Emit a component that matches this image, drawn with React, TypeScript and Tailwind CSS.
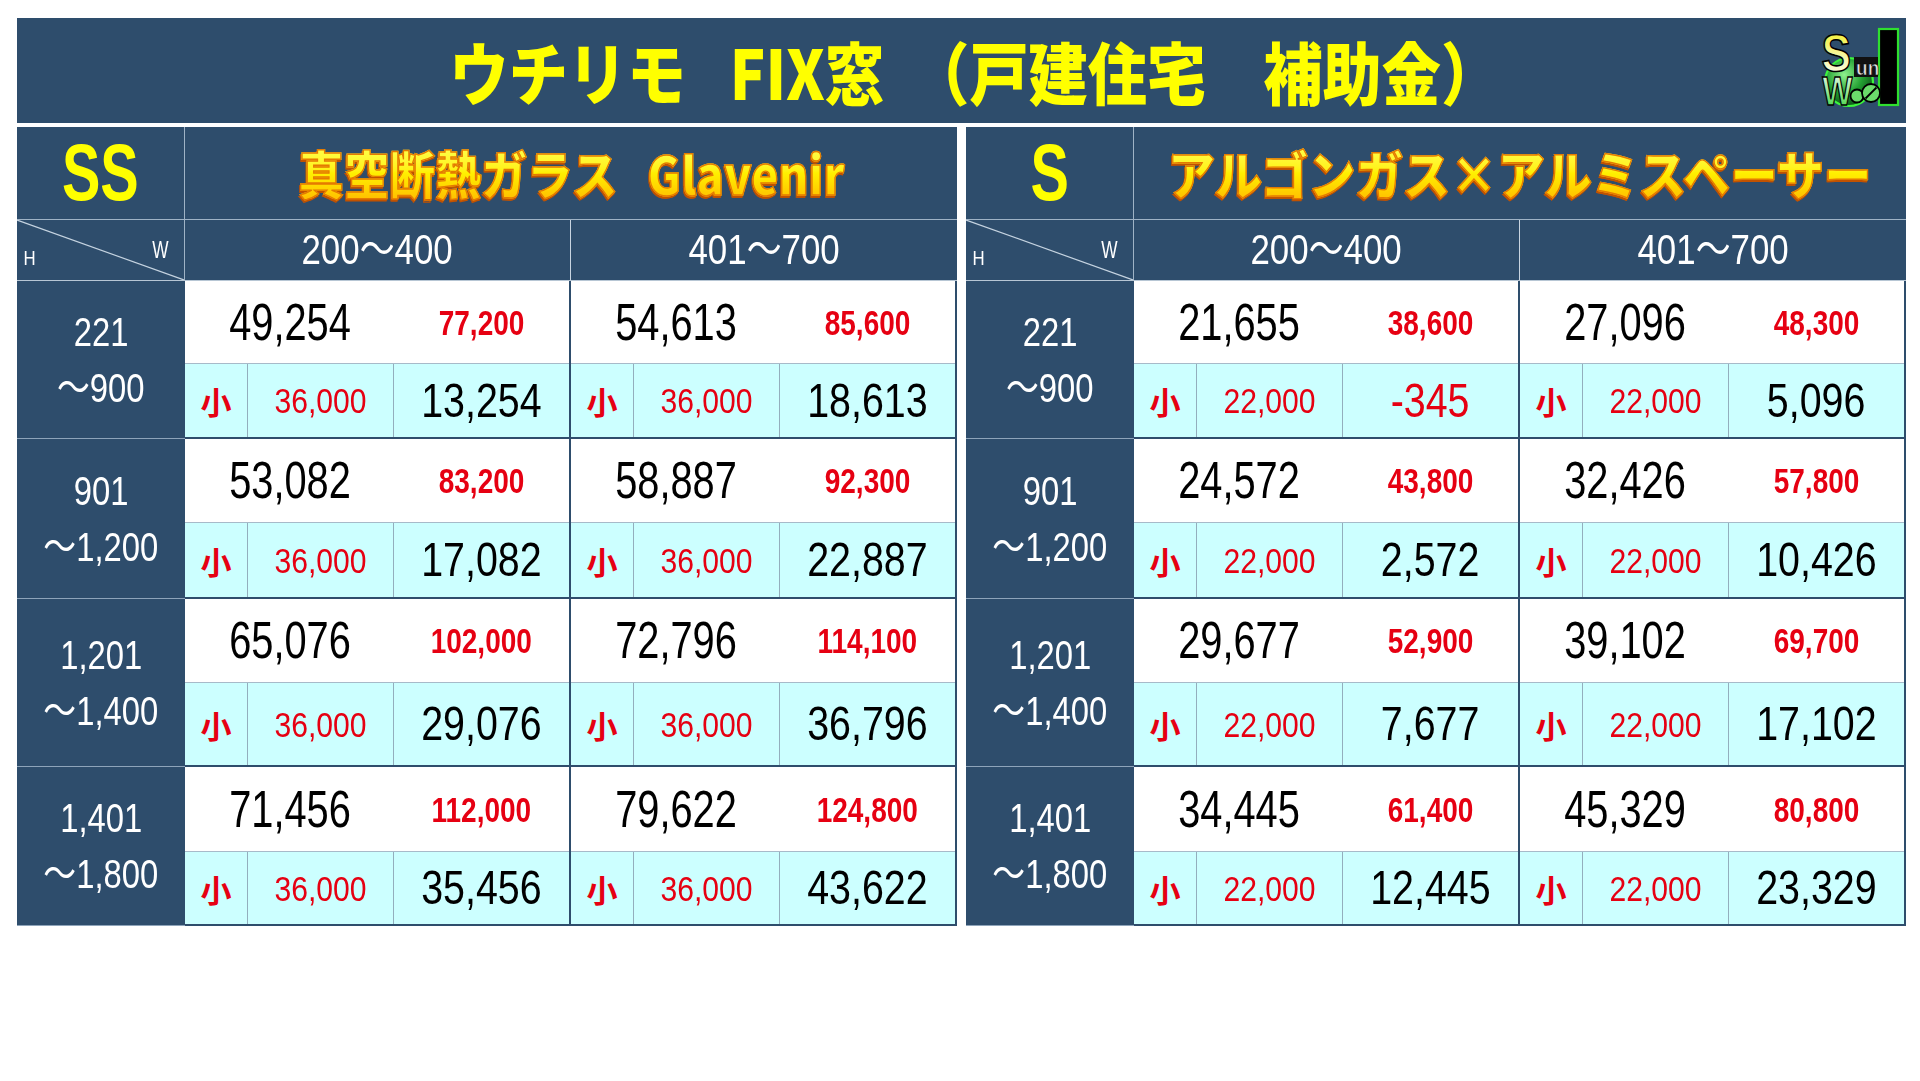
type Cell = {
  total: string;
  price: string;
  sub: string;
  net: string;
  negative?: boolean;
};

type Row = {
  from: string;
  to: string;
  whiteCls: string;
  cyanCls: string;
  cells: [Cell, Cell];
};

type TableData = {
  grade: string;
  title: React.ReactNode;
  rows: Row[];
};

const ROW_SIZES = [
  { whiteCls: "h-[83px]", cyanCls: "h-[73px]" },
  { whiteCls: "h-[84px]", cyanCls: "h-[74px]" },
  { whiteCls: "h-[84px]", cyanCls: "h-[82px]" },
  { whiteCls: "h-[85px]", cyanCls: "h-[72px]" },
];

const RANGES = [
  ["221", "～900"],
  ["901", "～1,200"],
  ["1,201", "～1,400"],
  ["1,401", "～1,800"],
];

function makeRows(cells: [Cell, Cell][]): Row[] {
  return cells.map((c, i) => ({
    from: RANGES[i][0],
    to: RANGES[i][1],
    whiteCls: ROW_SIZES[i].whiteCls,
    cyanCls: ROW_SIZES[i].cyanCls,
    cells: c,
  }));
}

const GLAVENIR: TableData = {
  grade: "SS",
  title: (
    <>
      真空断熱ガラス<span className="ml-[34px]">Glavenir</span>
    </>
  ),
  rows: makeRows([
    [
      { total: "49,254", price: "77,200", sub: "36,000", net: "13,254" },
      { total: "54,613", price: "85,600", sub: "36,000", net: "18,613" },
    ],
    [
      { total: "53,082", price: "83,200", sub: "36,000", net: "17,082" },
      { total: "58,887", price: "92,300", sub: "36,000", net: "22,887" },
    ],
    [
      { total: "65,076", price: "102,000", sub: "36,000", net: "29,076" },
      { total: "72,796", price: "114,100", sub: "36,000", net: "36,796" },
    ],
    [
      { total: "71,456", price: "112,000", sub: "36,000", net: "35,456" },
      { total: "79,622", price: "124,800", sub: "36,000", net: "43,622" },
    ],
  ]),
};

const ARGON: TableData = {
  grade: "S",
  title: <>アルゴンガス×アルミスペーサー</>,
  rows: makeRows([
    [
      { total: "21,655", price: "38,600", sub: "22,000", net: "-345", negative: true },
      { total: "27,096", price: "48,300", sub: "22,000", net: "5,096" },
    ],
    [
      { total: "24,572", price: "43,800", sub: "22,000", net: "2,572" },
      { total: "32,426", price: "57,800", sub: "22,000", net: "10,426" },
    ],
    [
      { total: "29,677", price: "52,900", sub: "22,000", net: "7,677" },
      { total: "39,102", price: "69,700", sub: "22,000", net: "17,102" },
    ],
    [
      { total: "34,445", price: "61,400", sub: "22,000", net: "12,445" },
      { total: "45,329", price: "80,800", sub: "22,000", net: "23,329" },
    ],
  ]),
};

function Logo() {
  return (
    <svg width="82" height="80" viewBox="0 0 82 80" overflow="visible">
      <defs>
        <radialGradient id="lg-ball" cx="40%" cy="35%" r="70%">
          <stop offset="0%" stopColor="#8ef08e" />
          <stop offset="55%" stopColor="#23a032" />
          <stop offset="100%" stopColor="#0b4a14" />
        </radialGradient>
        <linearGradient id="lg-s" x1="0" y1="0" x2="0" y2="1">
          <stop offset="0%" stopColor="#f0ee10" />
          <stop offset="55%" stopColor="#f6f6a0" />
          <stop offset="100%" stopColor="#ffffff" />
        </linearGradient>
        <linearGradient id="lg-w" x1="0" y1="0" x2="0" y2="1">
          <stop offset="0%" stopColor="#ffffff" />
          <stop offset="100%" stopColor="#2fd02f" />
        </linearGradient>
      </defs>
      <circle cx="30" cy="55" r="24" fill="url(#lg-ball)" stroke="#3cf53c" strokeWidth="2.2" />
      <rect x="60" y="2" width="19" height="76" fill="#000" stroke="#2fe02f" strokeWidth="2.2" />
      <rect x="35" y="30" width="24" height="20" fill="#111" />
      <text x="3" y="44" fontSize="52" fontWeight="700" fontFamily="Liberation Sans, sans-serif" fill="url(#lg-s)" stroke="#000" strokeWidth="1.6" transform="scale(0.85 1)">
        S
      </text>
      <text x="39" y="48" fontSize="20" fontWeight="700" fontFamily="Liberation Sans, sans-serif" fill="#e2e2e2" stroke="#000" strokeWidth="0.6" transform="scale(0.95 1)">
        un
      </text>
      <text x="4" y="78" fontSize="40" fontWeight="700" fontFamily="Liberation Sans, sans-serif" fill="url(#lg-w)" stroke="#000" strokeWidth="1.4" transform="scale(0.8 1)">
        W
      </text>
      <circle cx="38" cy="69" r="6.5" fill="#6bdc6b" stroke="#000" strokeWidth="1.8" />
      <circle cx="52" cy="66" r="9" fill="#6bdc6b" stroke="#000" strokeWidth="1.8" />
      <line x1="46.5" y1="71.5" x2="57.5" y2="60.5" stroke="#000" strokeWidth="1.8" />
    </svg>
  );
}

function WidthColumn({ cell, row, last }: { cell: Cell; row: Row; last: boolean }) {
  return (
    <div className={`flex flex-col ${last ? "w-[384px]" : "w-[386px] border-r-2 border-[#2e4d6c]"}`}>
      <div className={`${row.whiteCls} flex bg-white border-b border-[#a7bac9]`}>
        <div className="w-[209px] flex items-center justify-center">
          <span className="inline-block scale-x-[0.78] text-[51px] leading-none text-black">{cell.total}</span>
        </div>
        <div className="flex-1 flex items-center justify-center">
          <span className="inline-block scale-x-[0.8] text-[35px] font-bold leading-none text-[#e60012]">{cell.price}</span>
        </div>
      </div>
      <div className={`${row.cyanCls} flex bg-[#ccffff]`}>
        <div className="w-[63px] flex items-center justify-center border-r border-[#93aebd]">
          <span className="[font-family:'Noto_Sans_CJK_JP',sans-serif] text-[31px] font-bold leading-none text-[#e60012]">小</span>
        </div>
        <div className="w-[146px] flex items-center justify-center border-r border-[#93aebd]">
          <span className="inline-block scale-x-[0.86] text-[35px] leading-none text-[#e60012]">{cell.sub}</span>
        </div>
        <div className="flex-1 flex items-center justify-center">
          <span className={`inline-block scale-x-[0.82] text-[48px] leading-none ${cell.negative ? "text-[#e60012]" : "text-black"}`}>
            {cell.net}
          </span>
        </div>
      </div>
    </div>
  );
}

function PriceTable({ data, titleCls }: { data: TableData; titleCls: string }) {
  return (
    <div className="w-[940px] bg-[#2e4d6c]">
      <div className="flex h-[93px] border-b border-[#9fb3c6]">
        <div className="w-[168px] flex items-center justify-center border-r border-[#9fb3c6]">
          <span className="inline-block scale-x-[0.72] text-[80px] font-bold leading-none text-[#ffff00]">{data.grade}</span>
        </div>
        <div className="flex-1 flex items-center justify-center overflow-hidden">
          <span
            className={`inline-block shrink-0 whitespace-nowrap ${titleCls} [font-family:'Noto_Sans_CJK_JP',sans-serif] text-[52px] font-black leading-none bg-linear-to-b from-[#ffff48] via-[#fff000] to-[#ffc000] bg-clip-text text-transparent [-webkit-text-stroke:1.4px_#e57a00] [filter:drop-shadow(-1px_2px_0_#c25200)]`}
          >
            {data.title}
          </span>
        </div>
      </div>
      <div className="flex h-[61px] border-b border-[#b7c6d4] text-white">
        <div className="relative w-[168px] border-r border-[#9fb3c6]">
          <svg className="absolute inset-0 h-full w-full" viewBox="0 0 100 100" preserveAspectRatio="none">
            <line x1="0" y1="0" x2="100" y2="100" stroke="#c5d3e0" strokeWidth="1.2" vectorEffect="non-scaling-stroke" />
          </svg>
          <span className="absolute left-[5px] bottom-[12px] inline-block scale-x-[0.8] text-[21px] leading-none">H</span>
          <span className="absolute right-[12px] top-[18px] inline-block scale-x-[0.72] text-[24px] leading-none">W</span>
        </div>
        <div className="w-[386px] flex items-center justify-center border-r border-[#c9d5e1]">
          <span className="inline-block scale-x-[0.83] text-[42px] leading-none">200～400</span>
        </div>
        <div className="flex-1 flex items-center justify-center">
          <span className="inline-block scale-x-[0.83] text-[42px] leading-none">401～700</span>
        </div>
      </div>
      {data.rows.map((row) => (
        <div key={row.from} className="flex">
          <div className="w-[168px] flex flex-col items-center justify-center border-b border-[#8ea4ba] text-white">
            <span className="inline-block scale-x-[0.8] text-[41px] leading-[56px]">{row.from}</span>
            <span className="inline-block scale-x-[0.8] text-[41px] leading-[56px]">{row.to}</span>
          </div>
          <div className="flex border-b-2 border-[#2e4d6c]">
            <WidthColumn cell={row.cells[0]} row={row} last={false} />
            <WidthColumn cell={row.cells[1]} row={row} last={true} />
          </div>
        </div>
      ))}
    </div>
  );
}

export default function App() {
  return (
    <div className="w-[1920px] h-[1081px] bg-white pt-[18px] pl-[17px] [font-family:'Liberation_Sans','Noto_Sans_CJK_JP',sans-serif]">
      <div className="w-[1889px]">
        <div className="relative flex h-[105px] items-center justify-center bg-[#2e4d6c]">
          <span className="ml-[26px] inline-block whitespace-nowrap scale-x-[0.87] [font-family:'Noto_Sans_CJK_JP',sans-serif] text-[68px] font-black leading-none text-[#ffff00]">
            ウチリモ<span className="ml-[50px]">FIX窓</span>
            <span className="ml-[30px]">（戸建住宅</span>
            <span className="ml-[66px]">補助金）</span>
          </span>
          <div className="absolute right-[5px] top-[9px]">
            <Logo />
          </div>
        </div>
        <div className="mt-[4px] flex gap-[9px]">
          <PriceTable data={GLAVENIR} titleCls="scale-x-[0.88]" />
          <PriceTable data={ARGON} titleCls="scale-x-[0.91]" />
        </div>
      </div>
    </div>
  );
}
